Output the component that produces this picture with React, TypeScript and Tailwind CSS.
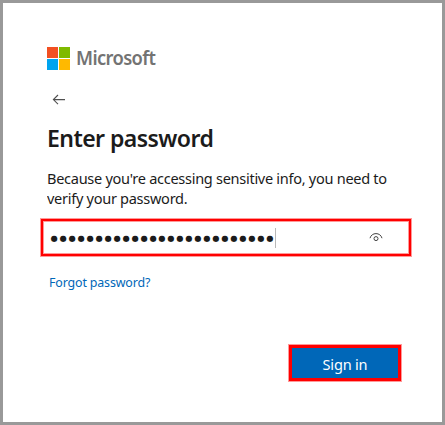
const PASSWORD_LENGTH = 25;

function MicrosoftLogo() {
  return (
    <div className="flex h-[23px] items-center">
      <div className="grid grid-cols-[11px_11px] grid-rows-[11px_11px] gap-px">
        <span className="bg-[#f25022]" />
        <span className="bg-[#7fba00]" />
        <span className="bg-[#00a4ef]" />
        <span className="bg-[#ffb900]" />
      </div>
      <span className="ml-[6px] origin-left scale-x-[0.965] text-[19px] leading-[23px] font-semibold tracking-[-0.65px] text-[#737373]">
        Microsoft
      </span>
    </div>
  );
}

function BackArrow() {
  return (
    <svg width="14" height="12" viewBox="0 0 14 12" fill="none" stroke="#505050" strokeWidth="1.1">
      <path d="M13 5.6H1.2M6 1L1.4 5.6L6 10.2" />
    </svg>
  );
}

function RevealIcon() {
  return (
    <svg width="14" height="10" viewBox="0 0 14 10" fill="none" stroke="#444444" strokeWidth="1">
      <path d="M1 5.2C1.8 2.2 4.2 0.6 7 0.6S12.2 2.2 13 5.2" />
      <circle cx="7" cy="5.6" r="2" />
    </svg>
  );
}

export default function App() {
  return (
    <main className="flex h-[425px] w-[445px] flex-col items-start border-[3px] border-[#999999] bg-white pt-[44px] pl-[37px] font-['Noto_Sans','Open_Sans',sans-serif] text-[#1b1b1b]">
      <div className="pl-[7px]">
        <MicrosoftLogo />
      </div>
      <button aria-label="Back" className="mt-[24px] ml-[12px]">
        <BackArrow />
      </button>
      <h1 className="mt-[16px] ml-[7px] origin-left scale-x-[0.96] text-[24px] leading-8 font-semibold tracking-[-0.6px] whitespace-nowrap">
        Enter password
      </h1>
      <p className="mt-[14px] ml-[7px] origin-left scale-x-[0.97] text-[15px] leading-5 tracking-[-0.3px] whitespace-nowrap">
        Because you're accessing sensitive info, you need to
        <br />
        verify your password.
      </p>
      <div className="mt-[11px] ml-px flex h-[37px] w-[370px] items-center border-2 border-[#ff0000] pr-[26px] pl-[7.5px] shadow-[0_0_0_1px_#ff9999,inset_0_0_0_1px_#ff9999]">
        <span className="mt-px w-[224.5px] font-['DejaVu_Sans'] text-[8.3px] leading-5 tracking-[1.75px] whitespace-nowrap">
          {"●".repeat(PASSWORD_LENGTH)}
        </span>
        <span className="h-5 w-px bg-[#b8b8b8]" />
        <button aria-label="Show password" className="ml-auto">
          <RevealIcon />
        </button>
      </div>
      <a href="#" className="mt-[16px] ml-[9px] origin-left scale-x-[0.955] text-[13px] leading-5 tracking-[-0.15px] whitespace-nowrap text-[#0067b8]">
        Forgot password?
      </a>
      <button className="mt-[53px] ml-[249px] h-[36px] w-[112px] border-[3px] border-[#ff0000] bg-[#0067b8] text-[15px] leading-5 tracking-[-0.2px] text-white shadow-[0_0_0_1px_#ff9999]">
        <span className="mt-px block scale-x-[0.97]">Sign in</span>
      </button>
    </main>
  );
}
